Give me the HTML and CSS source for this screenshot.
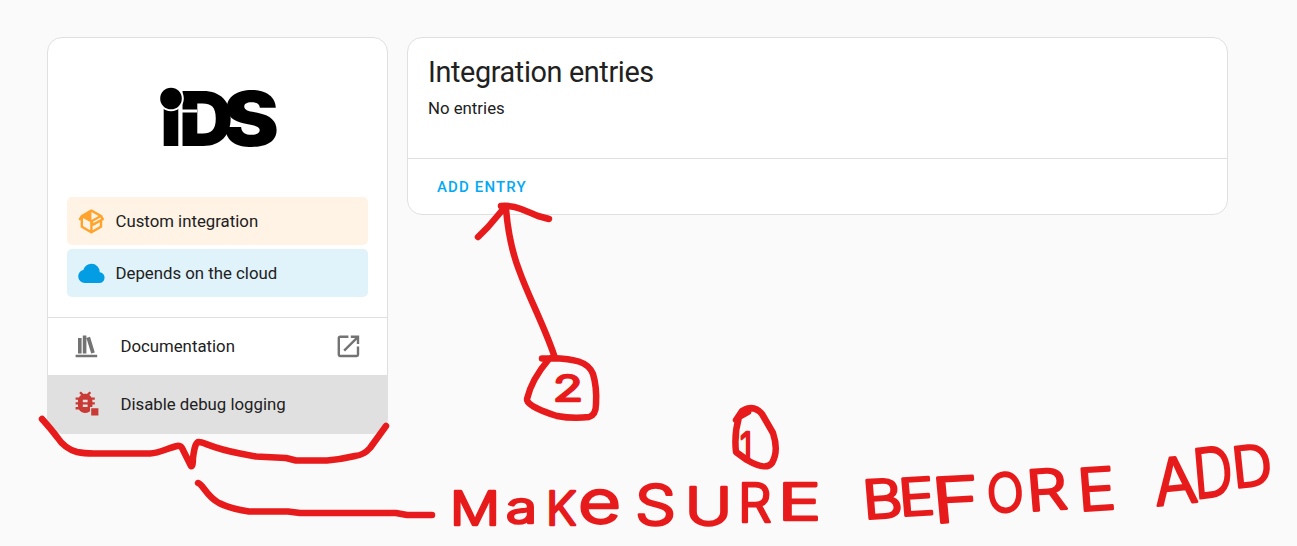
FILE: index.html
```
<!DOCTYPE html>
<html lang="en">
<head>
<meta charset="utf-8">
<title>Integration entries</title>
<link rel="stylesheet" href="styles.css">
</head>
<body>
<main class="page">
  <aside class="card info">
    <div class="brand">
      <svg class="logo" viewBox="0 0 120 64" role="img" aria-label="iDS">
        <text class="logo-text" y="63"><tspan x="1" textLength="22" lengthAdjust="spacingAndGlyphs">i</tspan><tspan x="20">D</tspan><tspan x="64" textLength="56" lengthAdjust="spacingAndGlyphs">S</tspan></text>
        <path class="notch" d="M23 26.500H38V29.500H23Z"/>
        <circle class="dot" cx="12" cy="15.500" r="11.800"/>
      </svg>
    </div>
    <div class="alerts">
      <div class="alert custom">
        <svg class="icon" viewBox="0 0 24 24"><path d="M2,10.96C1.5,10.68 1.35,10.07 1.63,9.59L3.13,7C3.24,6.8 3.41,6.66 3.6,6.58L11.43,2.18C11.59,2.06 11.79,2 12,2C12.21,2 12.41,2.06 12.57,2.18L20.47,6.62C20.66,6.72 20.82,6.88 20.91,7.08L22.36,9.6C22.64,10.08 22.47,10.69 22,10.96L21,11.54V16.5C21,16.88 20.79,17.21 20.47,17.38L12.57,21.82C12.41,21.94 12.21,22 12,22C11.79,22 11.59,21.94 11.43,21.82L3.53,17.38C3.21,17.21 3,16.88 3,16.5V10.96C2.7,11.13 2.32,11.14 2,10.96M12,4.15V4.15L12,10.85V10.85L17.96,7.5L12,4.15M5,15.91L11,19.29V12.58L5,9.21V15.91M19,15.91V12.69L14,15.59C13.67,15.77 13.3,15.76 13,15.6V19.29L19,15.91M13.85,13.36L20.13,9.73L19.55,8.72L13.27,12.35L13.85,13.36Z"/></svg>
        <span>Custom integration</span>
      </div>
      <div class="alert cloud">
        <svg class="icon" viewBox="0 0 24 24"><path d="M6.5 20Q4.22 20 2.61 18.43 1 16.85 1 14.58 1 12.63 2.17 11.1 3.35 9.57 5.25 9.15 5.88 6.85 7.75 5.43 9.63 4 12 4 14.93 4 16.96 6.04 19 8.07 19 11 20.73 11.2 21.86 12.5 23 13.78 23 15.5 23 17.38 21.69 18.69 20.38 20 18.5 20Z"/></svg>
        <span>Depends on the cloud</span>
      </div>
    </div>
    <div class="row docs">
      <svg class="icon" viewBox="0 0 24 24"><path d="M9 3V18H12V3H9M12 5L16 18L19 17L15 4L12 5M5 5V18H8V5H5M3 19V21H21V19H3Z"/></svg>
      <span class="label">Documentation</span>
      <svg class="icon" viewBox="0 0 24 24"><path d="M14,3V5H17.59L7.76,14.83L9.17,16.24L19,6.41V10H21V3M19,19H5V5H12V3H5C3.89,3 3,3.9 3,5V19A2,2 0 0,0 5,21H19A2,2 0 0,0 21,19V12H19V19Z"/></svg>
    </div>
    <div class="row debug">
      <svg class="icon" viewBox="0 0 24 24"><path transform="translate(-1 -1)" d="M14,12H10V10H14M14,16H10V14H14M20,8H17.19C16.74,7.22 16.12,6.55 15.37,6.04L17,4.41L15.59,3L13.42,5.17C12.96,5.06 12.5,5 12,5C11.5,5 11.05,5.06 10.59,5.17L8.41,3L7,4.41L8.62,6.04C7.88,6.55 7.26,7.22 6.81,8H4V10H6.09C6.04,10.33 6,10.66 6,11V12H4V14H6V15C6,15.34 6.04,15.67 6.09,16H4V18H6.81C7.85,19.79 9.78,21 12,21C14.22,21 16.15,19.79 17.19,18H20V16H17.91C17.96,15.67 18,15.34 18,15V14H20V12H18V11C18,10.66 17.96,10.33 17.91,10H20V8Z"/><path class="gap" d="M15 15H24V24H15Z"/><path d="M16 16H22V22H16Z"/></svg>
      <span class="label">Disable debug logging</span>
    </div>
  </aside>
  <section class="card entries">
    <div class="content">
      <h1>Integration entries</h1>
      <p>No entries</p>
    </div>
    <div class="actions"><button type="button">ADD ENTRY</button></div>
  </section>
</main>
<svg class="ink" viewBox="0 0 1297 546">
  <g class="strokes">
    <path d="M42 419Q51 429 57 437Q65 449 77 452Q84 453.500 94 453.500H150C160 453 168 448 177 446Q181 445 183 450L191 466Q193 467 193 458Q195 441 199 442C204 442 211 448 240 453.500L256 456.500L286 458L296 460.500H327Q340 459.500 355 456Q364 455 370 448L386 426"/>
    <path d="M198 483C203 484 206 496 219 503Q231 509 249 511.500H288L300 513H396L407 515H432"/>
    <path d="M478 237L488 227L505 207M501 206Q511 205 521 209T538 216L549 219M506 209Q509 244 519 270C529 298 543 323 554 355"/>
    <path d="M542 358.500H557M549 359C537 373 530 386 527 399C526 405 544 412 557 416Q573 419 589 417Q596 415 596 404Q597 387 593 374C588 361 574 359 551 358"/>
    <path d="M736 420L742 411Q754 404 762 414L773 433Q779 451 772 463Q766 471 747 460L736 452Q734 434 739 417L748 412"/>
  </g>
  <g class="hand">
    <text><tspan x="450" y="525" font-size="47" textLength="50" lengthAdjust="spacingAndGlyphs">M</tspan><tspan x="506" y="523" font-size="43" textLength="31" lengthAdjust="spacingAndGlyphs">a</tspan><tspan x="546" y="525" font-size="47">K</tspan><tspan x="578" y="523" font-size="60" textLength="43" lengthAdjust="spacingAndGlyphs">e</tspan></text>
    <text><tspan x="635" y="525" font-size="56" textLength="41" lengthAdjust="spacingAndGlyphs">S</tspan><tspan x="685" y="525" font-size="52" textLength="47" lengthAdjust="spacingAndGlyphs">U</tspan><tspan x="738" y="522" font-size="53">R</tspan><tspan x="778" y="520" font-size="50" textLength="43" lengthAdjust="spacingAndGlyphs">E</tspan></text>
    <text rotate="-4"><tspan x="864" y="519" font-size="53" textLength="40" lengthAdjust="spacingAndGlyphs">B</tspan><tspan x="900" y="516" font-size="51" textLength="36" lengthAdjust="spacingAndGlyphs">E</tspan><tspan x="934" y="523" font-size="62" textLength="48" lengthAdjust="spacingAndGlyphs">F</tspan><tspan x="988" y="513" font-size="53" textLength="37" lengthAdjust="spacingAndGlyphs">O</tspan><tspan x="1028" y="511" font-size="56" textLength="41" lengthAdjust="spacingAndGlyphs">R</tspan><tspan x="1079" y="511" font-size="58" textLength="38" lengthAdjust="spacingAndGlyphs">E</tspan></text>
    <text rotate="-6"><tspan x="1156" y="506" font-size="64">A</tspan><tspan x="1195" y="499" font-size="68" textLength="40" lengthAdjust="spacingAndGlyphs">D</tspan><tspan x="1234" y="488" font-size="56">D</tspan></text>
    <text x="553" y="401" font-size="36" textLength="30" lengthAdjust="spacingAndGlyphs">2</text>
    <text x="740" y="459" font-size="37" textLength="12" lengthAdjust="spacingAndGlyphs">1</text>
  </g>
</svg>
</body>
</html>
```
FILE: styles.css
```
* { box-sizing: border-box; }
body {
  margin: 0;
  height: 546px;
  overflow: hidden;
  background: #fafafa;
  color: #212121;
  font-family: Roboto, sans-serif;
  font-size: 16.8px;
}
.page { display: flex; align-items: flex-start; gap: 19px; padding: 37px 0 0 47px; }
.card { background: #fff; border: 1px solid #e0e0e0; border-radius: 15px; overflow: hidden; }
.info { width: 341px; }
.brand { height: 159px; padding: 45px 0 0 111px; }
.logo { display: block; width: 120px; height: 64px; overflow: visible; }
.logo-text { font: 900 75px Inter, sans-serif; fill: #000; }
.notch { fill: #fff; }
.dot { fill: #000; stroke: #fff; stroke-width: 2px; }
.alerts { display: flex; flex-direction: column; gap: 4px; padding: 0 19px 20px; border-bottom: 1px solid #e0e0e0; }
.alert { display: flex; align-items: center; gap: 9.7px; height: 48px; padding-left: 10px; border-radius: 5px; }
.icon { width: 28.8px; height: 28.8px; flex: none; fill: currentColor; }
.custom { background: #fff3e5; }
.custom .icon { color: #ffa32c; }
.cloud { background: #e0f2fa; }
.cloud .icon { color: #039de4; }
.row { display: flex; align-items: center; height: 57px; padding: 0 24px; }
.row .icon { color: #737373; }
.row .label { flex: 1; margin-left: 19.6px; padding-bottom: 2px; }
.debug { height: 59px; background: #e0e0e0; margin: 0 -1px -1px; padding: 0 25px 2px; }
.debug .icon { color: #c93a35; }
.debug .label { padding-bottom: 0; }
.icon .gap { fill: #e0e0e0; }
.entries { width: 821px; height: 178px; }
.content { height: 120px; padding: 14px 20px 0; }
h1 { margin: 0; font-size: 28.8px; font-weight: 400; line-height: 40px; letter-spacing: -0.37px; }
p { margin: 6px 0 0; line-height: 20px; }
.actions { height: 57px; border-top: 1px solid #e0e0e0; padding: 6px 10px; }
button { height: 43px; padding: 0 19px; border: 0; background: none; color: #03a9f4; font: 500 15px Roboto, sans-serif; letter-spacing: 1.15px; }
.ink { position: absolute; top: 0; left: 0; width: 1297px; height: 546px; pointer-events: none; }
.strokes { fill: none; stroke: #e71b1b; stroke-width: 6.5px; stroke-linecap: round; stroke-linejoin: round; }
.hand { font-family: Inter, sans-serif; font-weight: 300; fill: #e71b1b; stroke: #e71b1b; stroke-width: 2.6px; stroke-linejoin: round; }
```
